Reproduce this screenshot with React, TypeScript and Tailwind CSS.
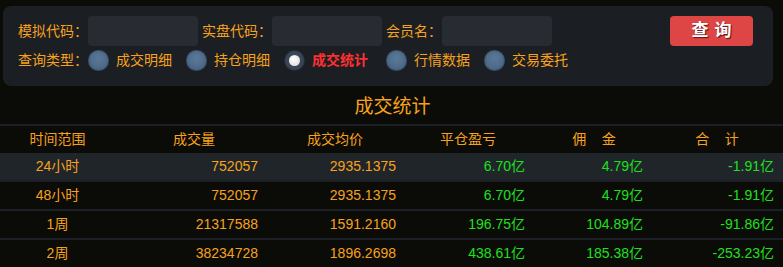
const rows = [
  { span: "24小时", vol: "752057", avg: "2935.1375", pnl: "6.70亿", fee: "4.79亿", sum: "-1.91亿" },
  { span: "48小时", vol: "752057", avg: "2935.1375", pnl: "6.70亿", fee: "4.79亿", sum: "-1.91亿" },
  { span: "1周", vol: "21317588", avg: "1591.2160", pnl: "196.75亿", fee: "104.89亿", sum: "-91.86亿" },
  { span: "2周", vol: "38234728", avg: "1896.2698", pnl: "438.61亿", fee: "185.38亿", sum: "-253.23亿" },
];

const types = ["成交明细", "持仓明细", "成交统计", "行情数据", "交易委托"];

const cols = "grid grid-cols-[115px_147px_138px_129px_118px_131px]";

function Radio({ on }: { on: boolean }) {
  if (on) {
    return (
      <span className="w-[21px] h-[21px] rounded-full bg-[#3b4756] flex items-center justify-center shadow-[inset_0_0_2px_#000]">
        <span className="w-[11px] h-[11px] rounded-full bg-[radial-gradient(circle_at_40%_35%,#ffffff,#d8d8d8)]" />
      </span>
    );
  }
  return (
    <span className="w-[21px] h-[21px] rounded-full bg-[radial-gradient(circle_at_50%_40%,#5b7898,#44607e)] shadow-[inset_0_0_2px_#1a2430]" />
  );
}

export default function App() {
  return (
    <div
      className="w-[783px] h-[267px] overflow-hidden bg-[#0b0b08] text-[14px] text-[#f7a21c]"
      style={{ fontFamily: '"Liberation Sans", "Noto Sans CJK SC", sans-serif' }}
    >
      <div className="pt-[6px] px-[3px] pr-[10px]">
        <div className="h-[80px] rounded-[8px] bg-[#1b1e23] pl-[15px] pr-[20px] pt-[10px]">
          <div className="flex items-center h-[30px]">
            <span className="w-[70px]">模拟代码：</span>
            <div className="w-[110px] h-[30px] rounded-[4px] bg-[#282b31]" />
            <span className="ml-[4px] w-[70px]">实盘代码：</span>
            <div className="w-[110px] h-[30px] rounded-[4px] bg-[#282b31]" />
            <span className="ml-[4px] w-[56px]">会员名：</span>
            <div className="w-[110px] h-[30px] rounded-[4px] bg-[#282b31]" />
            <button className="ml-auto w-[83px] h-[30px] rounded-[4px] bg-[#de4646] text-white font-bold text-[17px] tracking-[6px] pl-[6px] [text-shadow:1px_1px_1px_#5a1010]">
              查询
            </button>
          </div>
          <div className="flex items-center h-[30px] mt-[-1px]">
            <span className="w-[70px]">查询类型：</span>
            {types.map((t, i) => (
              <div key={t} className={`flex items-center gap-[7px] ${i === 2 ? "mr-[18px]" : "mr-[14px]"}`}>
                <Radio on={i === 2} />
                <span className={i === 2 ? "text-[#ff3030] font-bold" : ""}>{t}</span>
              </div>
            ))}
          </div>
        </div>
      </div>

      <div className="h-[38px] flex items-center justify-center text-[19px] pl-[2px] pt-[4px]">成交统计</div>

      <div className={`${cols} h-[29px] items-center border-t-2 border-[#1c2026]`}>
        <div className="text-center">时间范围</div>
        <div className="text-center pl-[11px]">成交量</div>
        <div className="text-center pl-[8px]">成交均价</div>
        <div className="text-center pl-[7px]">平仓盈亏</div>
        <div className="text-center pl-[12px]">佣&nbsp;&nbsp;&nbsp;&nbsp;金</div>
        <div className="text-center pl-[9px]">合&nbsp;&nbsp;&nbsp;&nbsp;计</div>
      </div>

      {rows.map((r, i) => (
        <div
          key={r.span}
          className={`${cols} h-[29px] items-center border-b-2 border-[#1c2026] ${i === 0 ? "bg-[#1f2529]" : ""}`}
        >
          <div className="text-center">{r.span}</div>
          <div className="text-right pr-[4px]">{r.vol}</div>
          <div className="text-right pr-[4px]">{r.avg}</div>
          <div className="text-right pr-[4px] text-[#1ee01e]">{r.pnl}</div>
          <div className="text-right pr-[4px] text-[#1ee01e]">{r.fee}</div>
          <div className="text-right pr-[4px] text-[#1ee01e]">{r.sum}</div>
        </div>
      ))}
    </div>
  );
}
